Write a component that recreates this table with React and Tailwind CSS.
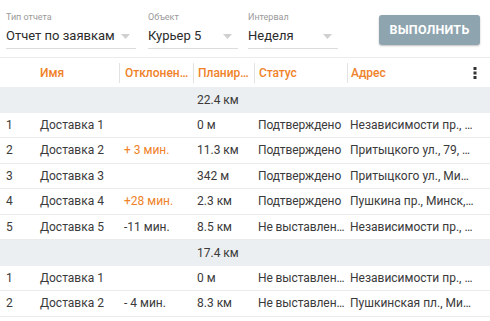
import { useState } from "react";

const cols = [
  { key: "n", w: "w-[36px]", pad: "pl-[6px]" },
  { key: "name", w: "w-[83px]", pad: "pl-[4px] pr-[4px]" },
  { key: "dev", w: "w-[74px]", pad: "pl-[5px] pr-[3px]" },
  { key: "plan", w: "w-[61px]", pad: "pl-[4px] pr-[2px]" },
  { key: "status", w: "w-[93px]", pad: "pl-[4px] pr-[0px] tracking-[-0.1px]" },
  { key: "addr", w: "flex-1", pad: "pl-[3px] pr-[16px]" },
];

const groups = [
  {
    total: "22.4 км",
    rows: [
      { n: 1, name: "Доставка 1", dev: "", plan: "0 м", status: "Подтверждено", addr: "Независимости пр., Минск" },
      { n: 2, name: "Доставка 2", dev: "+ 3 мин.", late: true, plan: "11.3 км", status: "Подтверждено", addr: "Притыцкого ул., 79, Минск" },
      { n: 3, name: "Доставка 3", dev: "", plan: "342 м", status: "Подтверждено", addr: "Притыцкого ул., Минск" },
      { n: 4, name: "Доставка 4", dev: "+28 мин.", late: true, plan: "2.3 км", status: "Подтверждено", addr: "Пушкина пр., Минск, Беларусь" },
      { n: 5, name: "Доставка 5", dev: "-11 мин.", plan: "8.5 км", status: "Не выставлен статус", addr: "Независимости пр., Минск" },
    ],
  },
  {
    total: "17.4 км",
    rows: [
      { n: 1, name: "Доставка 1", dev: "", plan: "0 м", status: "Не выставлен статус", addr: "Независимости пр., Минск" },
      { n: 2, name: "Доставка 2", dev: "- 4 мин.", plan: "8.3 км", status: "Не выставлен статус", addr: "Пушкинская пл., Минск" },
    ],
  },
];

function Select({ label, value, width }) {
  return (
    <div className={`${width} flex flex-col`}>
      <span className="text-[9px] leading-[11px] text-[#9a9a9a]">{label}</span>
      <div className="mt-[4px] pb-[3px] border-b border-[#dcdcdc] flex items-center justify-between">
        <span className="text-[13px] leading-[18px] text-[#2b2b2b]">{value}</span>
        <svg width="9" height="5" viewBox="0 0 9 5" className="mr-[6px]">
          <path d="M0 0 L9 0 L4.5 5 Z" fill="#d0d0d0" />
        </svg>
      </div>
    </div>
  );
}

function Kebab() {
  return (
    <svg width="4" height="12" viewBox="0 0 4 12">
      <rect x="0.5" y="0" width="3" height="3" fill="#333" />
      <rect x="0.5" y="4.5" width="3" height="3" fill="#333" />
      <rect x="0.5" y="9" width="3" height="3" fill="#333" />
    </svg>
  );
}

export default function App() {
  const [running, setRunning] = useState(false);
  const headers = ["", "Имя", "Отклонение", "Планируемый пробег", "Статус", "Адрес"];

  return (
    <div className="w-[490px] h-[321px] overflow-hidden bg-white font-['Roboto',sans-serif] text-[#3a3a3a]">
      <div className="flex items-start pt-[12px] pl-[6px] pr-[10px]">
        <Select label="Тип отчета" value="Отчет по заявкам" width="w-[130px]" />
        <div className="w-[12px]" />
        <Select label="Объект" value="Курьер 5" width="w-[90px]" />
        <div className="w-[10px]" />
        <Select label="Интервал" value="Неделя" width="w-[90px]" />
        <button
          onClick={() => setRunning(!running)}
          className="ml-auto mt-[3px] w-[101px] h-[30px] rounded-[3px] bg-[#8ea4ae] text-white text-[12.5px] font-bold tracking-[0.2px] shadow-[0_1px_2px_rgba(0,0,0,0.25)]"
        >
          ВЫПОЛНИТЬ
        </button>
      </div>

      <div className="mt-[8px] border-t border-[#ebebeb]">
        <div className="flex h-[29px] items-center">
          {cols.map((c, i) => (
            <div
              key={c.key}
              className={`${c.w} ${c.pad} min-w-0 h-[20px] flex items-center shrink-0 ${i > 1 ? "border-l border-[#e2e2e2]" : ""}`}
            >
              <span className="truncate text-[12px] font-medium text-[#ef8229]">
                {headers[i]}
              </span>
              {i === 5 && (
                <span className="ml-auto -mr-[3px]">
                  <Kebab />
                </span>
              )}
            </div>
          ))}
        </div>

        {groups.map((g, gi) => (
          <div key={gi}>
            <div className="flex h-[25.5px] items-center bg-[#eceff1] text-[12px]">
              <div className="w-[193px] shrink-0" />
              <div className="pl-[4px]">{g.total}</div>
            </div>
            {g.rows.map((r) => (
              <div key={r.n} className="flex h-[25.5px] items-center border-b border-[#ebebeb] text-[12px]">
                {cols.map((c) => (
                  <div
                    key={c.key}
                    className={`${c.w} ${c.pad} min-w-0 shrink-0 truncate ${c.key === "dev" && r.late ? "text-[#ef8229]" : ""}`}
                  >
                    {r[c.key]}
                  </div>
                ))}
              </div>
            ))}
          </div>
        ))}
      </div>
    </div>
  );
}
